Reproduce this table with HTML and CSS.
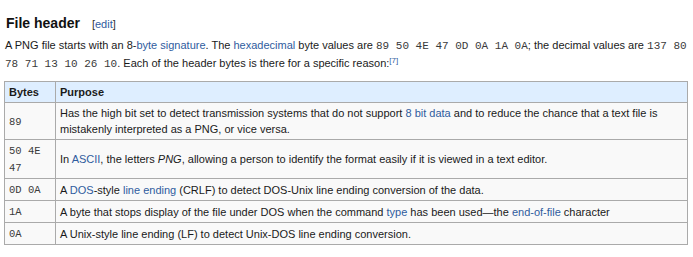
FILE: index.html
```html
<!DOCTYPE html>
<html lang="en">
<head>
<meta charset="utf-8">
<title>File header</title>
<link rel="stylesheet" href="styles.css">
</head>
<body>
<div class="page">
  <h2 class="section-title"><span class="headline">File header</span><span class="editsection">[<a href="#">edit</a>]</span></h2>
  <p class="intro">A PNG file starts with an 8-<a href="#">byte</a> <a href="#">signature</a>. The <a href="#">hexadecimal</a> byte values are <code>89 50 4E 47 0D 0A 1A 0A</code>; the decimal values are <code>137 80</code> <code>78 71 13 10 26 10</code>. Each of the header bytes is there for a specific reason:<sup class="ref"><a href="#">[7]</a></sup></p>
  <table class="wikitable">
    <thead>
      <tr><th class="col-bytes">Bytes</th><th>Purpose</th></tr>
    </thead>
    <tbody>
      <tr><td><code>89</code></td><td>Has the high bit set to detect transmission systems that do not support <a href="#">8 bit data</a> and to reduce the chance that a text file is mistakenly interpreted as a PNG, or vice versa.</td></tr>
      <tr><td><code>50 4E</code> <code>47</code></td><td>In <a href="#">ASCII</a>, the letters <i>PNG</i>, allowing a person to identify the format easily if it is viewed in a text editor.</td></tr>
      <tr><td><code>0D 0A</code></td><td>A <a href="#">DOS</a>-style <a href="#">line ending</a> (CRLF) to detect DOS-Unix line ending conversion of the data.</td></tr>
      <tr><td><code>1A</code></td><td>A byte that stops display of the file under DOS when the command <a href="#">type</a> has been used—the <a href="#">end-of-file</a> character</td></tr>
      <tr><td><code>0A</code></td><td>A Unix-style line ending (LF) to detect Unix-DOS line ending conversion.</td></tr>
    </tbody>
  </table>
</div>
</body>
</html>
```

FILE: styles.css
```css
html, body {
  margin: 0;
  padding: 0;
  background: #ffffff;
}

body {
  font-family: "Liberation Sans", Arial, sans-serif;
  color: #1a1a1a;
  font-size: 11px;
}

a {
  color: #2f5c9e;
  text-decoration: none;
}

.page {
  padding: 14px 6px 0 4px;
}

.section-title {
  margin: 0;
  padding-left: 2px;
  font-size: 14px;
  line-height: 18px;
  font-weight: bold;
  color: #111;
  display: flex;
  align-items: baseline;
  gap: 12px;
}

.editsection {
  font-size: 11px;
  font-weight: normal;
  color: #333;
}

.intro {
  margin: 4px 0 8px 0;
  padding-left: 1px;
  line-height: 17px;
}

code {
  font-family: "Liberation Mono", "Courier New", monospace;
  font-size: 11px;
  color: #3a3a3a;
  white-space: pre-wrap;
}

.ref {
  font-size: 8px;
  line-height: 0;
  vertical-align: 4px;
}

.wikitable {
  width: 684px;
  border-collapse: collapse;
  background: #f9f9f9;
  border: 1px solid #aaaaaa;
  font-size: 11px;
}

.wikitable th,
.wikitable td {
  border: 1px solid #aaaaaa;
  padding: 2px 4px 2px 4px;
  line-height: 16px;
  text-align: left;
  vertical-align: middle;
}

.wikitable th {
  background: #deeeff;
  font-weight: bold;
}

.wikitable .col-bytes {
  width: 42px;
}

.wikitable td code {
  font-size: 10.5px;
}
```
